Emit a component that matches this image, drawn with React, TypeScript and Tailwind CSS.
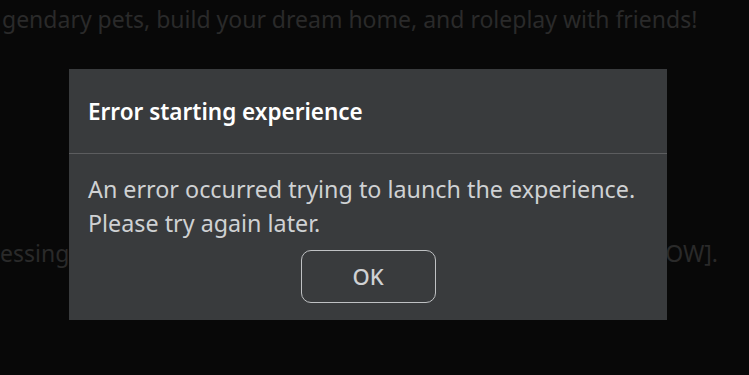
export default function App() {
  return (
    <div
      className="relative w-[749px] h-[375px] overflow-hidden bg-[#080808]"
      style={{ fontFamily: '"Noto Sans", "Open Sans", sans-serif' }}
    >
      <div className="pt-[3px] pl-[2px] text-[23px] leading-[32px] text-[#2a2a2a] whitespace-nowrap">
        gendary pets, build your dream home, and roleplay with friends!
      </div>
      <div className="mt-[202px] flex text-[23px] leading-[32px] text-[#2a2a2a] whitespace-nowrap">
        <span>essing the button below</span>
        <span className="ml-auto mr-[31px]">[ALLOW].</span>
      </div>

      <div className="absolute left-[69px] top-[69px] w-[598px] h-[251px] bg-[#393b3d] flex flex-col">
        <div className="h-[85px] border-b border-[#5c5d5f] flex items-center px-[19px] pt-[2px]">
          <h2 className="text-[22.5px] font-semibold text-white">Error starting experience</h2>
        </div>
        <div className="px-[19px] pt-[18px] text-[23.3px] leading-[34px] text-[#cfd1d3]">
          <p>An error occurred trying to launch the experience.</p>
          <p>Please try again later.</p>
        </div>
        <div className="flex justify-center mt-[10px]">
          <button className="w-[135px] h-[53px] rounded-[10px] border border-[#bfc1c3] text-[22px] text-[#cfd1d3] font-medium">
            OK
          </button>
        </div>
      </div>
    </div>
  );
}
